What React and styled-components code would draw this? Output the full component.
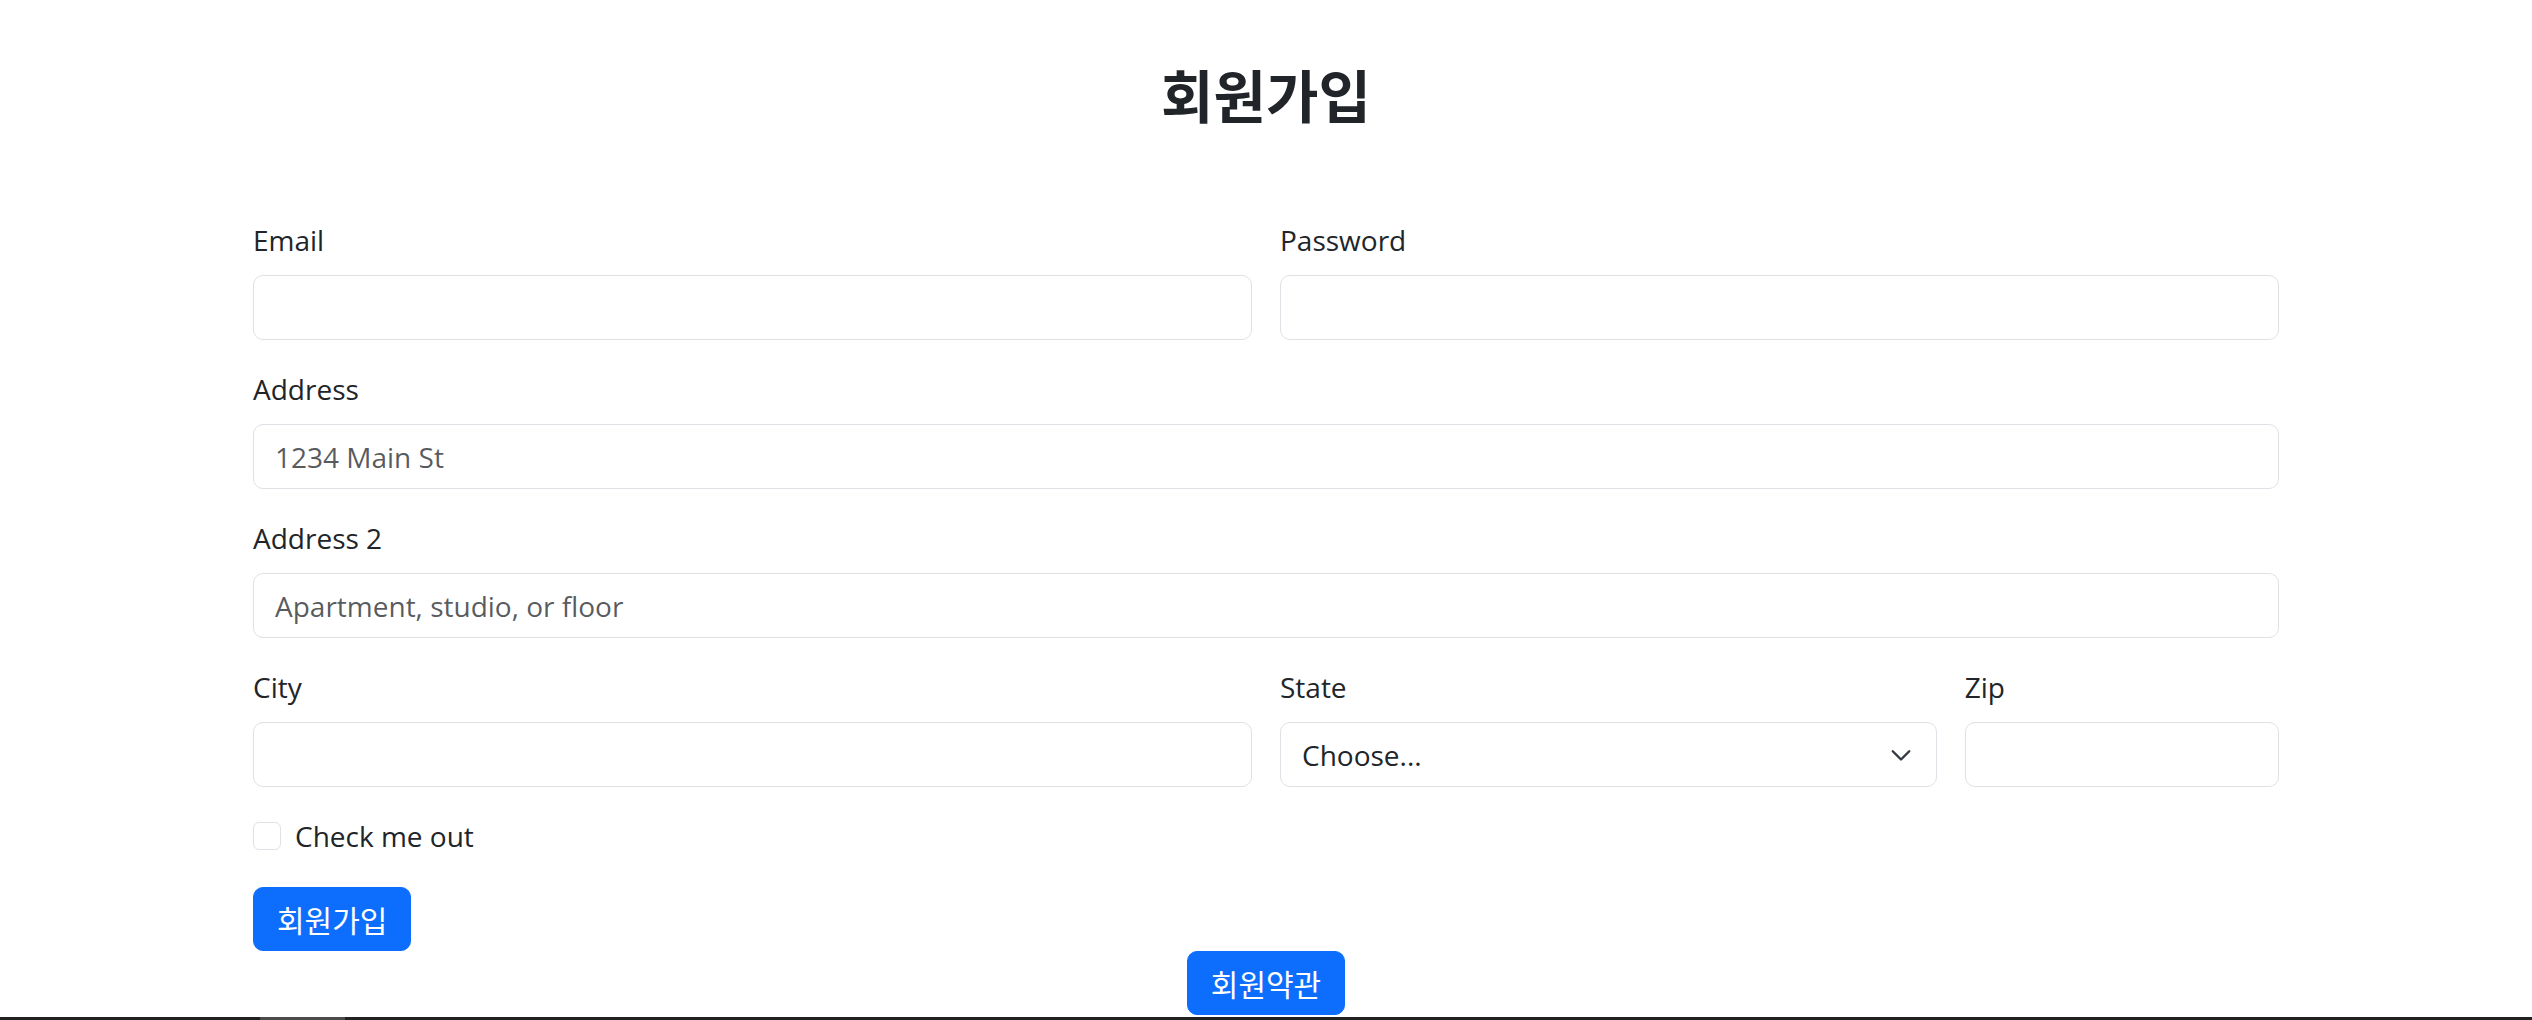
import React from 'react';
import styled, { createGlobalStyle } from 'styled-components';

const GlobalStyle = createGlobalStyle`
  * {
    box-sizing: border-box;
  }

  body {
    margin: 0;
    background: #ffffff;
    color: #212529;
    font-family: "Open Sans", "Noto Sans CJK KR", sans-serif;
  }
`;

const Page = styled.main`
  display: flex;
  flex-direction: column;
  min-height: 1020px;
`;

const Title = styled.h2`
  margin: 59px 0 92px;
  text-align: center;
  font-family: "Noto Sans CJK KR", sans-serif;
  font-size: 57px;
  font-weight: 700;
  line-height: 1.2;
  color: #212529;
`;

const Form = styled.form`
  width: 2026px;
  margin: 0 auto;
  display: grid;
  grid-template-columns: repeat(12, 1fr);
  column-gap: 28px;
  row-gap: 28px;
`;

const Field = styled.div`
  grid-column: span ${(p) => p.$span || 12};
  display: flex;
  flex-direction: column;
`;

const Label = styled.label`
  font-size: 28px;
  line-height: 42px;
  margin-bottom: 14px;
`;

const Input = styled.input`
  height: 65px;
  padding: 0 21px;
  font-family: inherit;
  font-size: 28px;
  color: #212529;
  background: #ffffff;
  border: 1px solid #dee2e6;
  border-radius: 10px;
  outline: none;

  &::placeholder {
    color: rgba(33, 37, 41, 0.75);
  }
`;

const SelectBox = styled.div`
  position: relative;
  height: 65px;
  display: flex;
  align-items: center;
  padding: 0 63px 0 21px;
  font-size: 28px;
  border: 1px solid #dee2e6;
  border-radius: 10px;
  background: #ffffff;
`;

const Chevron = styled.svg`
  position: absolute;
  right: 23px;
  top: 50%;
  width: 24px;
  height: 24px;
  transform: translateY(-50%);
`;

const CheckRow = styled.label`
  display: flex;
  align-items: center;
  gap: 14px;
  font-size: 28px;
  line-height: 42px;
  margin-bottom: 2px;
`;

const CheckBox = styled.span`
  width: 28px;
  height: 28px;
  border: 1px solid #dee2e6;
  border-radius: 6px;
  background: #ffffff;
`;

const Button = styled.button`
  align-self: ${(p) => (p.$center ? 'center' : 'flex-start')};
  height: 64px;
  padding: 0 23px;
  font-family: "Noto Sans CJK KR", sans-serif;
  font-size: 30px;
  line-height: 1;
  color: #ffffff;
  background: #0d6efd;
  border: 1px solid #0d6efd;
  border-radius: 10px;
  cursor: pointer;
`;

const Footer = styled.footer`
  margin-top: auto;
  height: 3px;
  display: flex;
  background: #222222;
`;

const FooterTab = styled.span`
  margin-left: 260px;
  width: 85px;
  background: #4b4b4b;
`;

const SignUp = () => {
  return (
    <Page>
      <GlobalStyle />
      <Title>회원가입</Title>

      <Form onSubmit={(e) => e.preventDefault()}>
        <Field $span={6}>
          <Label>Email</Label>
          <Input type="email" />
        </Field>
        <Field $span={6}>
          <Label>Password</Label>
          <Input type="password" />
        </Field>
        <Field>
          <Label>Address</Label>
          <Input placeholder="1234 Main St" />
        </Field>
        <Field>
          <Label>Address 2</Label>
          <Input placeholder="Apartment, studio, or floor" />
        </Field>
        <Field $span={6}>
          <Label>City</Label>
          <Input />
        </Field>
        <Field $span={4}>
          <Label>State</Label>
          <SelectBox>
            Choose...
            <Chevron viewBox="0 0 16 16" fill="none">
              <path
                d="M2.5 5.5l5.5 5.5 5.5-5.5"
                stroke="#343a40"
                strokeWidth="1.6"
                strokeLinecap="round"
                strokeLinejoin="round"
              />
            </Chevron>
          </SelectBox>
        </Field>
        <Field $span={2}>
          <Label>Zip</Label>
          <Input />
        </Field>
        <Field>
          <CheckRow>
            <CheckBox />
            Check me out
          </CheckRow>
        </Field>
        <Field>
          <Button type="submit">회원가입</Button>
        </Field>
      </Form>

      <Button type="button" $center>회원약관</Button>

      <Footer>
        <FooterTab />
      </Footer>
    </Page>
  );
};

export default SignUp;
